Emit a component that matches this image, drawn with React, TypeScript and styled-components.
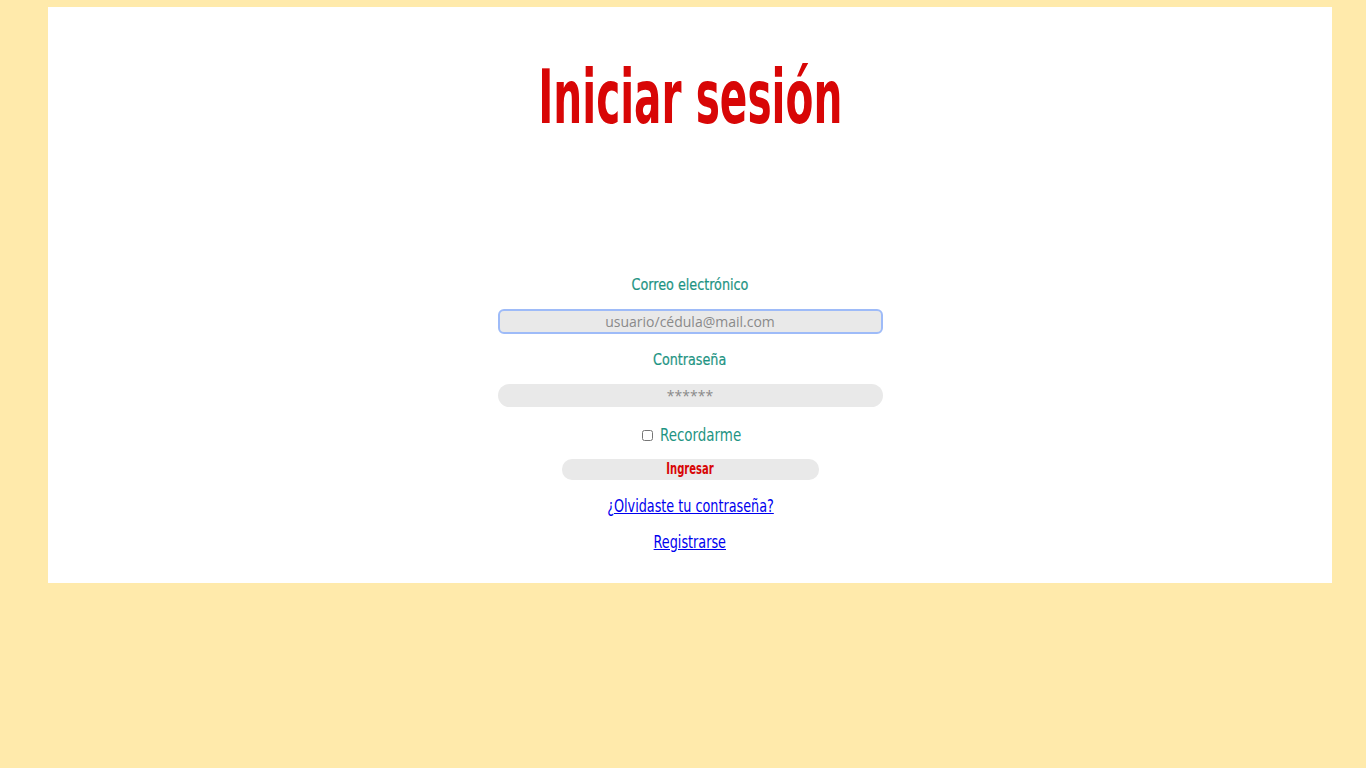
import React from "react";
import styled, { createGlobalStyle } from "styled-components";

const Global = createGlobalStyle`
  html, body { margin: 0; padding: 0; background: #ffeaab; }
  body { font-family: "DejaVu Sans Condensed", sans-serif; }
  * { box-sizing: border-box; }
`;

const Page = styled.div`
  padding-top: 7px;
  min-height: 768px;
`;

const Card = styled.main`
  margin-left: 48px;
  width: 1284px;
  height: 576px;
  background: #ffffff;
  display: flex;
  flex-direction: column;
  align-items: center;
`;

const Title = styled.h1`
  margin: 50px 0 0;
  font-family: "DejaVu Sans Condensed", sans-serif;
  font-weight: 700;
  font-size: 74px;
  line-height: 80px;
  color: #d80606;
`;

const Narrow = styled.span<{ $scale: number }>`
  display: inline-block;
  transform: scaleX(${(p) => p.$scale});
  transform-origin: center;
`;

const Form = styled.form`
  margin-top: 138px;
  width: 385px;
  display: flex;
  flex-direction: column;
  align-items: center;
`;

const Label = styled.label<{ $top?: number }>`
  font-family: "DejaVu Sans Condensed", sans-serif;
  font-size: 16.5px;
  line-height: 20px;
  color: #1e9483;
  -webkit-text-stroke: 0.2px #1e9483;
  transform: scaleX(0.86);
  margin: ${(p) => p.$top ?? 0}px 0 14px;
`;

const Input = styled.input<{ $focus?: boolean; $radius: number }>`
  width: 385px;
  height: ${(p) => (p.$focus ? 25 : 23)}px;
  border: ${(p) => (p.$focus ? "2px solid #9ebbf8" : "none")};
  border-radius: ${(p) => p.$radius}px;
  background: #e9e9e9;
  text-align: center;
  font-family: "Open Sans", sans-serif;
  font-size: 14px;
  color: #444;
  padding: 0;
  outline: none;
  &::placeholder { color: #8a8a8a; }
`;

const Remember = styled.div`
  margin: 18px 0 0 4px;
  display: flex;
  align-items: center;
  gap: 7px;
`;

const RememberText = styled.span`
  display: inline-block;
  font-family: "DejaVu Sans Condensed", sans-serif;
  font-size: 18px;
  line-height: 20px;
  color: #1e9483;
  transform: scaleX(0.83);
  transform-origin: left center;
  margin-right: -16px;
`;

const Check = styled.input`
  width: 11px;
  height: 11px;
  margin: 1px 0 0 0;
  accent-color: #888;
`;

const Button = styled.button`
  margin-top: 14px;
  width: 257px;
  height: 21px;
  border: none;
  border-radius: 10px;
  background: #e9e9e9;
  color: #d80606;
  font-family: "DejaVu Sans Condensed", sans-serif;
  font-weight: 700;
  font-size: 15.5px;
  line-height: 21px;
  padding: 0;
`;

const Link = styled.a<{ $top: number }>`
  display: inline-block;
  margin-top: ${(p) => p.$top}px;
  font-family: "DejaVu Sans Condensed", sans-serif;
  font-size: 18px;
  line-height: 20px;
  color: #0000ee;
  text-decoration: underline;
  transform: scaleX(0.79);
`;

export default function App() {
  return (
    <Page>
      <Global />
      <Card>
        <Title>
          <Narrow $scale={0.61}>Iniciar sesión</Narrow>
        </Title>
        <Form onSubmit={(e) => e.preventDefault()}>
          <Label htmlFor="email">Correo electrónico</Label>
          <Input id="email" $focus $radius={6} placeholder="usuario/cédula@mail.com" />
          <Label htmlFor="pass" $top={16}>Contraseña</Label>
          <Input id="pass" type="password" $radius={12} placeholder="******" />
          <Remember>
            <Check type="checkbox" id="rem" />
            <RememberText>Recordarme</RememberText>
          </Remember>
          <Button type="submit">
            <Narrow $scale={0.72}>Ingresar</Narrow>
          </Button>
          <Link href="#" $top={16}>¿Olvidaste tu contraseña?</Link>
          <Link href="#" $top={16}>Registrarse</Link>
        </Form>
      </Card>
    </Page>
  );
}
